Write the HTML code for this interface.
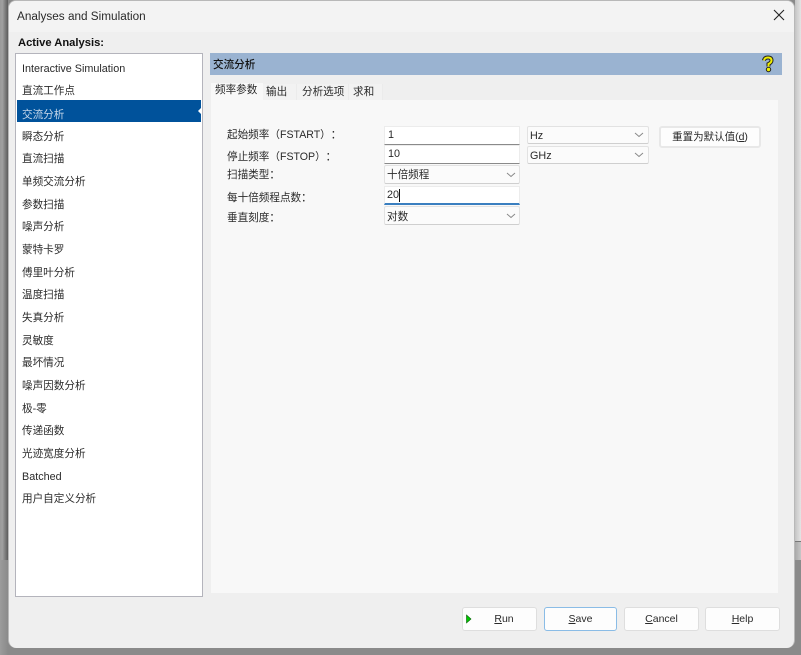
<!DOCTYPE html>
<html lang="zh-CN"><head><meta charset="utf-8"><style>
html,body{margin:0;padding:0}
body{width:801px;height:655px;overflow:hidden;position:relative;background:#8a8a8a;font-family:"Liberation Sans","Noto Sans CJK SC",sans-serif;font-size:10.6px;color:#2a2a2a;text-spacing-trim:space-all}
div,svg{position:absolute;box-sizing:border-box}
.t{white-space:nowrap;line-height:14px;height:14px;filter:blur(.3px)}
.e{font-size:10.8px}
.c{background:#fbfbfb;border:1px solid #e2e2e2;border-bottom:1px solid #cfcfcf;border-radius:2px}
.i{background:#fff;border:1px solid #ececec;border-bottom:1px solid #8a8a8a}
.b{background:#fdfdfd;border:1px solid #dedede;border-radius:3px;text-align:center;font-size:10.5px;color:#2a2a2a}
.b span{filter:blur(.3px);display:inline-block}
u{text-underline-offset:1px}
</style></head><body>
<div style="left:795px;top:0;width:6px;height:541px;background:linear-gradient(90deg,#c4c4c4,#e4e4e4)"></div>
<div style="left:795px;top:541px;width:6px;height:1px;background:#777"></div>
<div style="left:795px;top:542px;width:6px;height:18px;background:linear-gradient(90deg,#a8a8a8,#c6c6c6)"></div>
<div style="left:0;top:0;width:8px;height:655px;background:linear-gradient(90deg,#9a9a9a,#a0a0a0 30%,#5c5c5c)"></div>
<div style="left:0;top:560px;width:8px;height:95px;background:linear-gradient(90deg,#9c9c9c,#8a8a8a)"></div>
<div style="left:8px;top:0;width:787px;height:648px;background:#efefef;border:1px solid #b8b8b8;border-bottom:0;border-radius:8px;overflow:hidden">
<div style="left:0;top:0;width:785px;height:31px;background:#f3f3f3"></div></div>
<div class="t" style="left:17px;top:10px;font-size:11.75px">Analyses and Simulation</div>
<svg style="left:773px;top:9px" width="12" height="12"><path d="M1 1L11 11M11 1L1 11" stroke="#222" stroke-width="1.1" fill="none"/></svg>
<div class="t" style="left:18px;top:36px;font-weight:bold;font-size:11.2px;color:#111">Active Analysis:</div>
<div style="left:15px;top:53px;width:188px;height:544px;background:#fff;border:1px solid #b4b4bc"></div>
<div style="left:17px;top:100px;width:184px;height:22px;background:#00529b"></div>
<svg style="left:198px;top:107px" width="3" height="8"><path d="M3 1L0 4L3 7Z" fill="#fff"/></svg>
<div class="t e" style="left:22px;top:62px">Interactive Simulation</div>
<div class="t" style="left:22px;top:84px">直流工作点</div>
<div class="t" style="left:22px;top:108px;color:#c8d8ea">交流分析</div>
<div class="t" style="left:22px;top:130px">瞬态分析</div>
<div class="t" style="left:22px;top:152px">直流扫描</div>
<div class="t" style="left:22px;top:175px">单频交流分析</div>
<div class="t" style="left:22px;top:198px">参数扫描</div>
<div class="t" style="left:22px;top:220px">噪声分析</div>
<div class="t" style="left:22px;top:243px">蒙特卡罗</div>
<div class="t" style="left:22px;top:266px">傅里叶分析</div>
<div class="t" style="left:22px;top:288px">温度扫描</div>
<div class="t" style="left:22px;top:311px">失真分析</div>
<div class="t" style="left:22px;top:334px">灵敏度</div>
<div class="t" style="left:22px;top:356px">最坏情况</div>
<div class="t" style="left:22px;top:379px">噪声因数分析</div>
<div class="t" style="left:22px;top:402px">极-零</div>
<div class="t" style="left:22px;top:424px">传递函数</div>
<div class="t" style="left:22px;top:447px">光迹宽度分析</div>
<div class="t e" style="left:22px;top:470px">Batched</div>
<div class="t" style="left:22px;top:492px">用户自定义分析</div>

<div style="left:210px;top:53px;width:572px;height:22px;background:#9ab3d1"></div>
<div class="t" style="left:213px;top:58px;color:#111;font-weight:500">交流分析</div>
<svg style="left:760px;top:54px" width="16" height="20"><path d="M4 6.500Q4.500 3.500 8 3.500Q11.500 3.500 11.500 6.500Q11.500 8.500 8.500 10L8.500 12.500" fill="none" stroke="#222" stroke-width="4"/><path d="M4 6.500Q4.500 3.500 8 3.500Q11.500 3.500 11.500 6.500Q11.500 8.500 8.500 10L8.500 12.500" fill="none" stroke="#f0ee00" stroke-width="2"/><circle cx="8.500" cy="15.500" r="2.200" fill="#f0ee00" stroke="#222"/></svg>

<div style="left:211px;top:83px;width:52px;height:17px;background:#f8f8f8"></div>
<div style="left:263px;top:84px;width:34px;height:16px;background:#f2f2f2;border-right:1px solid #ebebeb"></div>
<div style="left:297px;top:84px;width:52px;height:16px;background:#f2f2f2;border-right:1px solid #ebebeb"></div>
<div style="left:349px;top:84px;width:34px;height:16px;background:#f2f2f2;border-right:1px solid #ebebeb"></div>
<div class="t" style="left:215px;top:83px">频率参数</div>
<div class="t" style="left:266px;top:85px">输出</div>
<div class="t" style="left:302px;top:85px">分析选项</div>
<div class="t" style="left:353px;top:85px">求和</div>
<div style="left:211px;top:100px;width:567px;height:493px;background:#f8f8f8"></div>

<div class="t" style="left:227px;top:128px">起始频率（FSTART）：</div>
<div class="t" style="left:227px;top:150px">停止频率（FSTOP）：</div>
<div class="t" style="left:227px;top:168px">扫描类型：</div>
<div class="t" style="left:227px;top:191px">每十倍频程点数：</div>
<div class="t" style="left:227px;top:211px">垂直刻度：</div>

<div class="i" style="left:384px;top:126px;width:136px;height:19px"></div>
<div class="t e" style="left:388px;top:128px">1</div>
<div class="i" style="left:384px;top:145px;width:136px;height:19px"></div>
<div class="t e" style="left:388px;top:147px">10</div>
<div class="c" style="left:384px;top:165px;width:136px;height:19px"></div>
<div class="t" style="left:387px;top:168px">十倍频程</div>
<div class="i" style="left:384px;top:186px;width:136px;height:19px;border-bottom:2px solid #3a7fc0"></div>
<div class="t e" style="left:387px;top:188px">20</div>
<div style="left:399px;top:189px;width:1px;height:13px;background:#111"></div>
<div class="c" style="left:384px;top:206px;width:136px;height:19px"></div>
<div class="t" style="left:387px;top:210px">对数</div>

<div class="c" style="left:527px;top:126px;width:122px;height:18px"></div>
<div class="t e" style="left:530px;top:129px">Hz</div>
<div class="c" style="left:527px;top:146px;width:122px;height:18px"></div>
<div class="t e" style="left:530px;top:149px">GHz</div>
<svg style="left:0;top:0" width="801" height="655"><path d="M507 173L511 176.500L515 173M507 214L511 217.500L515 214M635 133L639 136.500L643 133M635 153L639 156.500L643 153" stroke="#888" stroke-width="1" fill="none"/></svg>
<div class="b" style="left:659px;top:126px;width:102px;height:22px;line-height:19px;border-width:2px;border-color:#e8e8e8"><span>重置为默认值(<u>d</u>)</span></div>

<div class="b" style="left:462px;top:607px;width:75px;height:24px;line-height:23px;padding-left:9px"><span><u>R</u>un</span></div>
<svg style="left:466px;top:614px" width="6" height="10"><path d="M0.500 1L5 5L0.500 9Z" fill="#00c800" stroke="#006000" stroke-width=".6"/></svg>
<div class="b" style="left:544px;top:607px;width:73px;height:24px;line-height:22px;border-color:#8abce6"><span><u>S</u>ave</span></div>
<div class="b" style="left:624px;top:607px;width:75px;height:24px;line-height:23px"><span><u>C</u>ancel</span></div>
<div class="b" style="left:705px;top:607px;width:75px;height:24px;line-height:23px"><span><u>H</u>elp</span></div>
</body></html>
